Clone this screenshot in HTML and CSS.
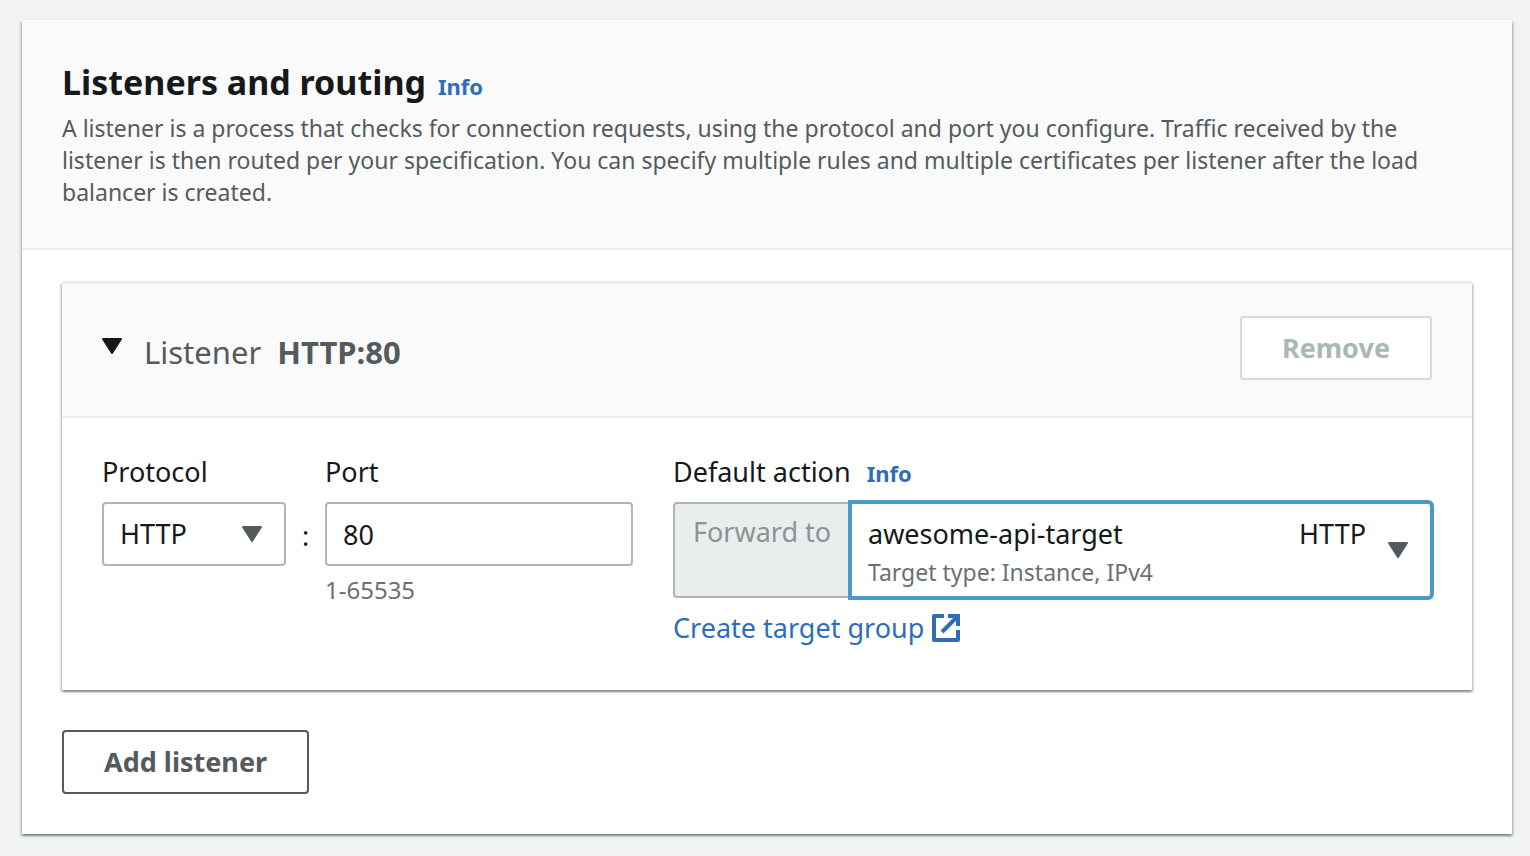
FILE: index.html
```
<!DOCTYPE html>
<html lang="en">
<head>
<meta charset="utf-8">
<meta name="viewport" content="width=device-width, initial-scale=1">
<title>Listeners and routing</title>
<link rel="stylesheet" href="styles.css">
</head>
<body>
<main class="panel">
  <header class="panel-header">
    <div class="heading-row">
      <h1 class="panel-title">Listeners and routing</h1>
      <a class="info-link" href="#">Info</a>
    </div>
    <p class="description">A listener is a process that checks for connection requests, using the protocol and port you configure. Traffic received by the listener is then routed per your specification. You can specify multiple rules and multiple certificates per listener after the load balancer is created.</p>
  </header>

  <div class="panel-body">
    <section class="listener">
      <header class="listener-header">
        <h2 class="listener-heading">
          <button class="listener-toggle" type="button" aria-expanded="true">
            <svg class="toggle-caret" viewBox="0 0 20 24" aria-hidden="true"><path d="M1 5H19L10 19Z" fill="currentColor" stroke="currentColor" stroke-width="2" stroke-linejoin="round"/></svg>
            <span>Listener</span>
            <strong>HTTP:80</strong>
          </button>
        </h2>
        <button class="button" type="button" disabled>Remove</button>
      </header>

      <div class="listener-form">
        <div class="field">
          <label class="label" for="protocol">Protocol</label>
          <div class="select-wrap">
            <select class="control" id="protocol">
              <option>HTTP</option>
              <option>HTTPS</option>
            </select>
            <svg class="caret select-caret" viewBox="0 0 20 16" aria-hidden="true"><path d="M1 1H19L10 15Z" fill="currentColor" stroke="currentColor" stroke-width="2" stroke-linejoin="round"/></svg>
          </div>
        </div>
        <span class="separator">:</span>
        <div class="field">
          <label class="label" for="port">Port</label>
          <input class="control" id="port" type="text" inputmode="numeric" value="80" aria-describedby="port-hint">
          <span class="hint" id="port-hint">1-65535</span>
        </div>
        <div class="field action">
          <div class="label-row">
            <span class="label" id="action-label">Default action</span>
            <a class="info-link" href="#">Info</a>
          </div>
          <div class="action-group" role="group" aria-labelledby="action-label">
            <button class="forward" type="button" disabled>Forward to</button>
            <button class="target" type="button" aria-haspopup="listbox">
              <span class="target-text">
                <span class="target-line"><span>awesome-api-target</span><span>HTTP</span></span>
                <span class="target-detail">Target type: Instance, IPv4</span>
              </span>
              <svg class="caret" viewBox="0 0 20 16" aria-hidden="true"><path d="M1 1H19L10 15Z" fill="currentColor" stroke="currentColor" stroke-width="2" stroke-linejoin="round"/></svg>
            </button>
          </div>
          <a class="create-link" href="#">Create target group
            <svg class="external-icon" viewBox="0 0 28 28" fill="none" stroke="currentColor" stroke-width="4" aria-hidden="true"><path d="M12 2H2V26H26V16" stroke-linejoin="round"/><path d="M16 2H26V12M25 3L10 18"/></svg>
          </a>
        </div>
      </div>
    </section>

    <button class="button" type="button">Add listener</button>
  </div>
</main>
</body>
</html>
```
FILE: styles.css
```
* {
  box-sizing: border-box;
}

body {
  margin: 0;
  padding: 20px 18px 22px 22px;
  background: #f2f3f3;
  color: #16191b;
  font: 450 27px/32px "Noto Sans", "Open Sans", sans-serif;
}

h1,
h2,
p {
  margin: 0;
}

button,
input,
select {
  margin: 0;
  color: inherit;
  font: inherit;
}

a {
  color: #2f6db5;
  text-decoration: none;
}

.panel,
.listener {
  background: #fff;
  box-shadow:
    0 -1px 0 #eaeded,
    0 2px 2px rgba(0, 28, 36, 0.3),
    2px 2px 2px rgba(0, 28, 36, 0.15),
    -2px 2px 2px rgba(0, 28, 36, 0.15);
}

.panel-header {
  padding: 40px;
  background: #fafafa;
  border-bottom: 2px solid #eaeded;
}

.heading-row,
.label-row {
  display: flex;
  align-items: baseline;
  gap: 16px;
}

.heading-row {
  gap: 12px;
  margin-bottom: 8px;
}

.panel-title {
  font-size: 34px;
  line-height: 44px;
}

.info-link {
  font-size: 22px;
  font-weight: 700;
}

.description {
  color: #545b5e;
  font-size: 23px;
  font-weight: 420;
}

.panel-body {
  padding: 32px 40px 40px;
}

.listener {
  margin-bottom: 40px;
  border-top: 2px solid #eaeded;
}

.listener-header {
  display: flex;
  align-items: center;
  justify-content: space-between;
  padding: 32px 40px 36px;
  background: #fafafa;
  border-bottom: 2px solid #eaeded;
}

.listener-heading {
  color: #545b5e;
  font-size: 31px;
  font-weight: 400;
  line-height: 36px;
}

.listener-toggle {
  display: flex;
  gap: 16px;
  padding: 8px 0 0;
  background: none;
  border: 0;
}

.toggle-caret {
  width: 20px;
  height: 24px;
  margin-right: 6px;
  color: #16191b;
}

.button {
  height: 64px;
  padding: 0 40px;
  background: #fff;
  border: 2px solid #545b5e;
  border-radius: 4px;
  color: #545b5e;
  font-weight: 700;
}

.button:disabled {
  border-color: #d5dbdb;
  color: #aab7b8;
}

.listener-form {
  display: grid;
  grid-template-columns: 184px 39px minmax(0, 308fr) minmax(0, 799fr);
  padding: 38px 40px 46px;
}

.field {
  display: flex;
  flex-direction: column;
}

.field > .label,
.label-row {
  margin-bottom: 14px;
}

.label-row {
  height: 32px;
}

.control {
  width: 100%;
  height: 64px;
  padding: 0 16px;
  appearance: none;
  background: #fff;
  border: 2px solid #aeb6b6;
  border-radius: 4px;
}

.select-wrap {
  position: relative;
}

.caret {
  flex: none;
  width: 20px;
  height: 16px;
  color: #545b5e;
}

.select-caret {
  position: absolute;
  top: 24px;
  right: 24px;
  pointer-events: none;
}

.separator {
  padding-top: 64px;
  text-align: center;
}

.hint {
  margin-top: 8px;
  color: #6b7072;
  font-size: 24px;
}

.action {
  padding-left: 40px;
}

.action-group {
  display: flex;
  height: 96px;
}

.forward {
  display: flex;
  flex: none;
  width: 175px;
  padding: 12px 0 0 18px;
  background: #eaeded;
  border: 2px solid #aeb6b6;
  border-right: 0;
  border-radius: 4px 0 0 4px;
  color: #8b9494;
}

.target {
  display: flex;
  flex: 1;
  align-items: center;
  gap: 22px;
  margin: -2px -2px -2px 0;
  padding: 6px 22px 6px 16px;
  background: #fff;
  border: 4px solid #4a9bc3;
  border-radius: 0 6px 6px 0;
  text-align: left;
}

.target-text {
  display: flex;
  flex: 1;
  flex-direction: column;
  padding-bottom: 4px;
}

.target-line {
  display: flex;
  justify-content: space-between;
  line-height: 48px;
}

.target-detail {
  color: #6b7072;
  font-size: 23px;
  font-weight: 420;
  line-height: 28px;
}

.create-link {
  display: flex;
  align-items: center;
  gap: 8px;
  margin-top: 14px;
  font-weight: 420;
}

.external-icon {
  width: 28px;
  height: 28px;
}
```
